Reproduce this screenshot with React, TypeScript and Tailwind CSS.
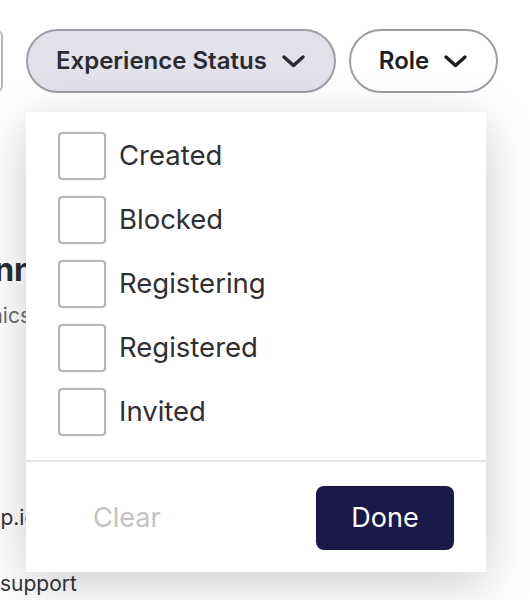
import React from 'react';

const statuses = ['Created', 'Blocked', 'Registering', 'Registered', 'Invited'];

function Chevron() {
  return (
    <svg className="w-[25px] h-[14px]" viewBox="0 0 25 14" fill="none" stroke="currentColor">
      <path d="M3 3l9.5 8.5L22 3" strokeWidth={3.5} strokeLinecap="round" strokeLinejoin="round" />
    </svg>
  );
}

export default function App() {
  return (
    <div
      className="relative w-[530px] h-[600px] overflow-hidden bg-white text-[#2b2b30]"
      style={{ fontFamily: 'Inter, "Noto Sans", sans-serif' }}
    >
      {/* filter bar */}
      <div className="flex items-center pt-[29px]">
        <div className="w-[20px] h-[62px] -ml-[17px] border-2 border-[#b7b6bd] rounded-md" />
        <button className="ml-[23px] flex items-center gap-[14px] h-[64px] pl-[28px] pr-[28px] rounded-full border-2 border-[#9e9da6] bg-[#e3e2eb] text-[24px] font-semibold text-[#2b2b30]">
          Experience Status
          <Chevron />
        </button>
        <button className="ml-[13px] flex items-center gap-[14px] h-[64px] pl-[28px] pr-[28px] rounded-full border-2 border-[#9e9da6] bg-white text-[24px] font-semibold text-[#1f1f24]">
          Role
          <Chevron />
        </button>
      </div>

      {/* content behind the menu */}
      <div className="flex flex-col mt-[157px]">
        <div className="flex justify-end w-[34px] whitespace-nowrap text-[32px] font-bold leading-[40px] text-[#2b2b30]">
          Glenn
        </div>
        <div className="flex justify-end w-[31px] mt-[12px] whitespace-nowrap text-[21px] leading-[28px] text-[#6b6b70]">
          Mechanics
        </div>
        <div className="flex justify-end w-[37px] mt-[174px] whitespace-nowrap text-[21px] leading-[28px] text-[#333338]">
          help.io
        </div>
        <div className="mt-[38px] whitespace-nowrap text-[21px] leading-[28px] text-[#333338]">support</div>
      </div>

      {/* dropdown */}
      <div className="absolute left-[26px] top-[112px] w-[460px] bg-white shadow-[0_12px_48px_rgba(0,0,0,0.2)]">
        <div className="flex flex-col gap-4 pl-[32px] pt-[20px] pb-[24px]">
          {statuses.map((s) => (
            <label key={s} className="flex items-center gap-[13px]">
              <span className="w-[48px] h-[48px] border-2 border-[#b6b5bc] rounded-[4px] bg-white" />
              <span className="text-[27.5px] text-[#2f2f34]">{s}</span>
            </label>
          ))}
        </div>
        <div className="h-[2px] bg-[#e6e5ec]" />
        <div className="flex items-center justify-between pl-[67px] pr-[32px] pt-[24px] pb-[22px]">
          <button className="text-[27px] text-[#c2c2c4]">Clear</button>
          <button className="w-[138px] h-[64px] rounded-lg bg-[#1a1848] text-white text-[27px]">Done</button>
        </div>
      </div>
    </div>
  );
}
